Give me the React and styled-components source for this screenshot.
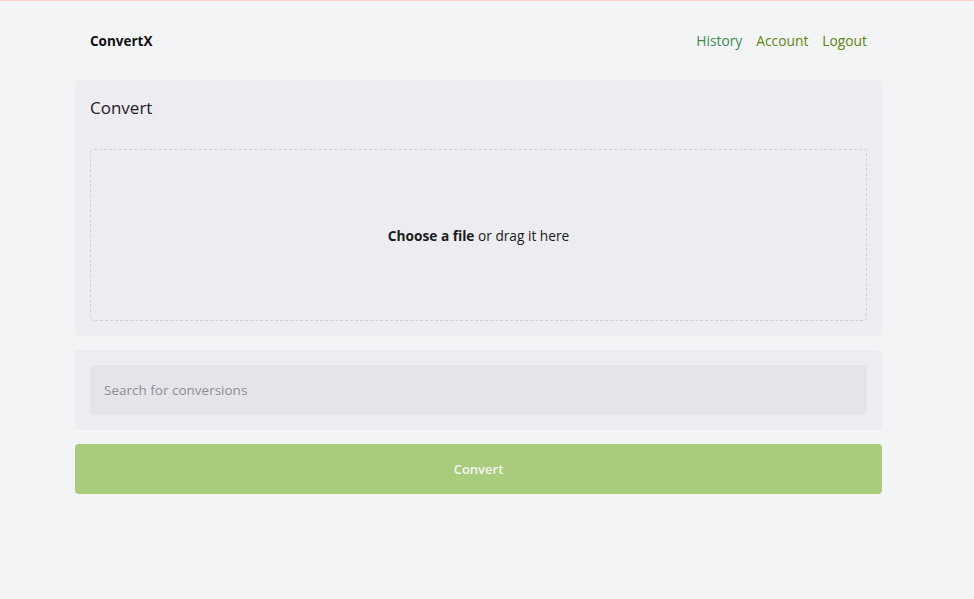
import React from "react";
import styled, { createGlobalStyle } from "styled-components";

const GlobalStyle = createGlobalStyle`
    html, body {
        margin:0;
        padding:0;
        background:#f3f4f6;
    }
    body {
        font-family:"Open Sans", "Noto Sans", sans-serif;
        color:#1f2024;
        border-top:1px solid #fad3cd;
        min-height:598px;
    }
`;

const Page = styled.div`
    width:807px;
    margin-left:75px;
`;

const Header = styled.header`
    height:79px;
    display:flex;
    align-items:center;
    justify-content:space-between;
    padding:0 15px;
`;

const Logo = styled.a`
    font-size:13.5px;
    font-weight:700;
    color:#111;
    text-decoration:none;
`;

const Nav = styled.nav`
    display:flex;
    gap:14px;
`;

const NavLink = styled.a`
    font-size:13.8px;
    color:${props => props.color};
    text-decoration:none;
`;

const Card = styled.section`
    background:#edecf0;
    border-radius:4px;
    padding:15px;
    margin-bottom:14px;
`;

const Title = styled.h1`
    margin:0 0 28px;
    font-size:17px;
    font-weight:400;
    line-height:26px;
`;

const Dropzone = styled.div`
    height:170px;
    border:1px dashed #cfd0d6;
    border-radius:4px;
    display:flex;
    align-items:center;
    justify-content:center;
    font-size:13.7px;
    color:#1a1b20;
    b {
        font-weight:700;
    }
`;

const Search = styled.input`
    display:block;
    box-sizing:border-box;
    width:100%;
    height:50px;
    border:none;
    border-radius:4px;
    background:#e4e4e9;
    padding:0 14px;
    font-family:inherit;
    font-size:13.5px;
    outline:none;
    &::placeholder {
        color:#8c8e96;
    }
`;

const Button = styled.button`
    display:block;
    width:100%;
    height:50px;
    border:none;
    border-radius:4px;
    background:#a8cb7c;
    color:#f6f9f1;
    font-family:inherit;
    font-size:13px;
    font-weight:600;
    margin-top:1px;
`;

export default function App() {
    return (
        <>
            <GlobalStyle />
            <Page>
                <Header>
                    <Logo href="#">ConvertX</Logo>
                    <Nav>
                        <NavLink href="#" color="#3e8a55">History</NavLink>
                        <NavLink href="#" color="#5f8410">Account</NavLink>
                        <NavLink href="#" color="#5f8410">Logout</NavLink>
                    </Nav>
                </Header>
                <Card>
                    <Title>Convert</Title>
                    <Dropzone>
                        <span><b>Choose a file</b> or drag it here</span>
                    </Dropzone>
                </Card>
                <Card>
                    <Search placeholder="Search for conversions" />
                </Card>
                <Button>Convert</Button>
            </Page>
        </>
    );
}
